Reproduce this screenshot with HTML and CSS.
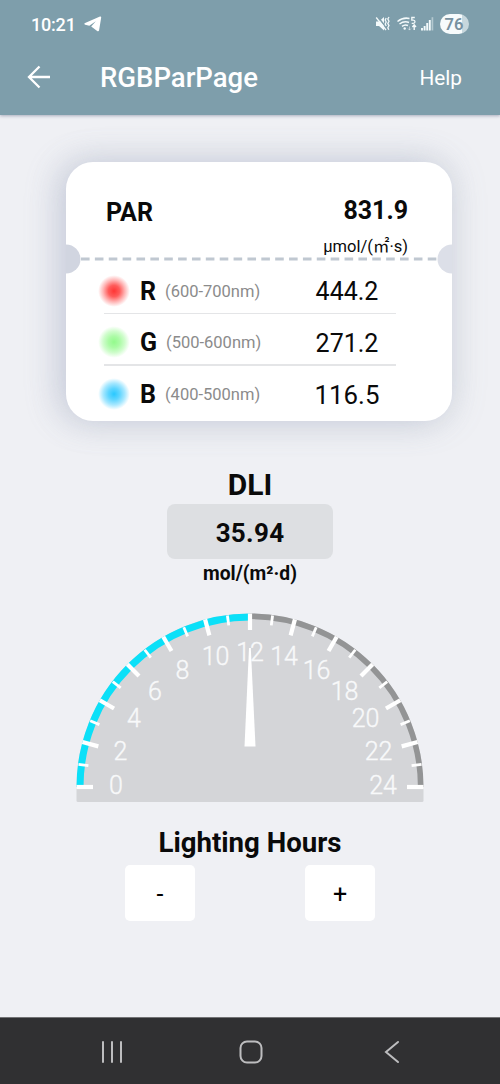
FILE: index.html
```html
<!DOCTYPE html>
<html lang="en">
<head>
<meta charset="utf-8">
<title>RGBParPage</title>
<link rel="stylesheet" href="styles.css">
</head>
<body>
<div class="screen">
  <header class="header">
    <div class="status">
      <span class="time">10:21</span>
      <svg class="telegram" width="18" height="16" viewBox="0 0 18 16"><path d="M0.500 7.200Q0 8.400 1.200 8.700L5.300 9.700 11.800 5.200 7.200 10.500 13.500 15.200Q14.800 15.700 15.100 14.300L17.200 1.500Q17.200 0.300 16 0.600z" fill="#fff"/></svg>
      <svg class="signals" width="60" height="18" viewBox="0 0 60 18" fill="none" stroke="#f4fafb">
        <path d="M1 6.500h3L9 2v13.500L4 11H1z" fill="#f4fafb" stroke="none"/>
        <path d="M2.500 1.500 12 13.500" stroke="#7e9eab" stroke-width="1.600"/>
        <path d="M1.200 2.500 11 15" stroke-width="1.300"/>
        <path d="M11.200 3l-1 2 1 2-1 2 1 2M14 2l-1.200 2 1.200 2.200-1.200 2.200L14 10.600l-1.200 2.200 1 2" stroke-width="1.300"/>
        <path d="M22.500 6.500Q28 2 34.500 3.500M24.500 9Q29 5.700 34 7.500M27 11.300Q30 9 33 10.500" stroke-width="1.500"/>
        <circle cx="29.700" cy="13.500" r="1.200" fill="#f4fafb" stroke="none"/>
        <path d="M39.800 2.500h-3v2.700h1.500q1.700.100 1.700 1.600 0 1.500-1.800 1.500h-1.500" stroke-width="1.300"/>
        <path d="M39.200 15v-5M37.400 12l1.800-2.200 1.800 2.200" stroke-width="1.400"/>
        <path d="M34.500 11.500v3.500M33 13.500l1.500 1.600 1.500-1.600" stroke-width="1" opacity=".5"/>
        <path d="M47 15.500v-2.500M49.600 15.500v-4.500M52.200 15.500V8M54.800 15.500V5" stroke-width="1.900"/>
        <path d="M57.400 15.500V2.200" stroke-width="1.700" opacity=".45"/>
      </svg>
      <span class="battery">76</span>
    </div>
    <div class="appbar">
      <svg class="back" width="24" height="24" viewBox="0 0 24 24" fill="none" stroke="#fff" stroke-width="2.300"><path d="M23 12H2M12.500 1.500 2 12l10.500 10.500"/></svg>
      <h1 class="title">RGBParPage</h1>
      <span class="help">Help</span>
    </div>
  </header>

  <main class="content">
    <section class="card">
      <div class="card-top">
        <span class="par">PAR</span>
        <div class="total">
          <span class="total-value">831.9</span>
          <span class="total-unit">μmol/(㎡·s)</span>
        </div>
      </div>
      <svg class="tear" width="386" height="30" viewBox="0 0 386 30">
        <path d="M0 0.500a14.500 14.500 0 0 1 0 29z" fill="#d1d5e0"/>
        <path d="M386 0.500a14.500 14.500 0 0 0 0 29z" fill="#dcdfe8"/>
        <path d="M15 15H371" stroke="#c0c8d1" stroke-width="2.800" stroke-dasharray="8.600 5.270"/>
      </svg>
      <div class="rows">
        <div class="row"><i class="dot red"></i><b>R</b><span class="range">(600-700nm)</span><span class="value">444.2</span></div>
        <div class="row"><i class="dot green"></i><b>G</b><span class="range">(500-600nm)</span><span class="value">271.2</span></div>
        <div class="row"><i class="dot blue"></i><b>B</b><span class="range">(400-500nm)</span><span class="value value-wide">116.5</span></div>
      </div>
    </section>

    <section class="dli">
      <h2 class="dli-title">DLI</h2>
      <div class="dli-value">35.94</div>
      <div class="dli-unit">mol/(m²·d)</div>
    </section>

    <svg class="gauge" width="350" height="192" viewBox="0 0 350 192">
      <path d="M1.500 176A173.500 173.500 0 0 1 348.500 176V189.500Q348.500 191 347 191H3Q1.500 191 1.500 189.500z" fill="#d4d5d8"/>
      <path d="M5 176A170 170 0 0 1 175 6" fill="none" stroke="#0be0f8" stroke-width="7"/>
      <path d="M175 5.300A170.700 170.700 0 0 1 345.700 176" fill="none" stroke="#939495" stroke-width="5.600"/>
      <g id="ticks" stroke="#fff"></g>
      <g class="scale">
        <text x="41" y="182.500">0</text><text x="45.500" y="148.500">2</text><text x="59" y="116">4</text>
        <text x="80" y="88.500">6</text><text x="107.500" y="67.500">8</text><text x="140.500" y="54">10</text>
        <text x="175" y="49.500">12</text><text x="209" y="54">14</text><text x="241.500" y="67.500">16</text>
        <text x="269.500" y="88.500">18</text><text x="290.500" y="116">20</text><text x="303.500" y="148.500">22</text>
        <text x="308" y="182.500">24</text>
      </g>
      <path d="M174 37h1.800L180.500 135.500h-11z" fill="#fff"/>
    </svg>

    <section class="hours">
      <h2 class="hours-title">Lighting Hours</h2>
      <div class="buttons"><button class="step">-</button><button class="step">+</button></div>
    </section>
  </main>

  <nav class="nav">
    <svg width="22" height="24" viewBox="0 0 22 24" fill="none" stroke="#bdbdbf" stroke-width="2" stroke-linecap="round"><path d="M2 2v20M11 2v20M20 2v20"/></svg>
    <svg class="home" width="24" height="24" viewBox="0 0 24 24" fill="none" stroke="#bdbdbf" stroke-width="2"><rect x="1.500" y="1.500" width="21" height="21" rx="6.500"/></svg>
    <svg width="16" height="24" viewBox="0 0 16 24" fill="none" stroke="#bdbdbf" stroke-width="2" stroke-linecap="round"><path d="M14 2 2 12l12 10"/></svg>
  </nav>
</div>
<script src="gauge.js"></script>
</body>
</html>
```
FILE: gauge.js
```js
// One tick per hour, 7.5 degrees apart; even hours are longer.
const ticks = document.getElementById("ticks");
for (let h = 0; h <= 24; h++) {
  const major = h % 2 === 0;
  const line = document.createElementNS("http://www.w3.org/2000/svg", "line");
  line.setAttribute("x1", major ? 1.5 : 2);
  line.setAttribute("x2", major ? 18 : 12);
  line.setAttribute("y1", 176);
  line.setAttribute("y2", 176);
  line.setAttribute("stroke-width", major ? 4.2 : 2.8);
  line.setAttribute("transform", `rotate(${h * 7.5} 175 176)`);
  ticks.appendChild(line);
}
```
FILE: styles.css
```css
* { box-sizing: border-box; }
body { margin: 0; font-family: Roboto, "Noto Sans CJK SC", sans-serif; color: #0a0a0a; }
h1, h2 { margin: 0; }
svg { display: block; flex: none; }
.screen { width: 500px; height: 1084px; display: flex; flex-direction: column; background: #eff0f4; overflow: hidden; }
.header { height: 115px; background: #7e9eab; color: #fff; box-shadow: 0 1px 3px rgba(100, 105, 135, .5); }
.status { height: 48px; padding: 0 31px; display: flex; align-items: center; }
.time { font-size: 18px; font-weight: 500; line-height: 20px; width: 44px; padding-top: 1px; letter-spacing: -.2px; }
.telegram { margin-left: 9px; }
.signals { margin-left: auto; }
.battery { width: 29px; height: 20px; margin-left: 5px; padding-right: 1px; border-radius: 10px; background: linear-gradient(90deg, #f7fbfc 76%, #c7d7dd 76%); color: #7891a0; font-size: 16.500px; font-weight: 600; line-height: 21px; text-align: center; }
.appbar { height: 58px; padding: 0 38px 0 27px; display: flex; align-items: center; }
.title { margin-left: 49px; padding-top: 1px; font-size: 27.500px; font-weight: 500; line-height: 32px; }
.help { margin-left: auto; padding-top: 1px; font-size: 20.800px; line-height: 24px; }
.content { flex: 1; display: flex; flex-direction: column; align-items: center; padding-top: 47px; }
.card { width: 386px; height: 259px; margin-left: 18px; border-radius: 27px; background: #fff; box-shadow: -9px 0 32px rgba(155, 163, 196, .3), 0 0 34px rgba(140, 155, 165, .26); }
.card-top { height: 82px; padding: 33px 44px 0 40px; display: flex; justify-content: space-between; }
.par { font-size: 25px; font-weight: 700; line-height: 36px; }
.total { display: flex; flex-direction: column; align-items: flex-end; }
.total-value { font-size: 25px; font-weight: 700; line-height: 32px; }
.total-unit { font-size: 16.500px; line-height: 20px; margin-top: 10px; }
.rows { padding: 0 56px 0 38px; margin-top: -9px; }
.row { height: 51.500px; display: flex; align-items: center; position: relative; }
.row + .row::before { content: ""; position: absolute; top: -4px; left: 0; right: 0; height: 1.500px; background: #e4e5e7; }
.dot { width: 32px; height: 32px; margin-left: -6px; flex: none; border-radius: 50%; }
.red { background: radial-gradient(circle, #ff3534 0%, #ff5c5b 25%, rgba(255, 70, 70, .4) 48%, rgba(255, 70, 70, 0) 70%); }
.green { background: radial-gradient(circle, #93fa8c 0%, #abfba5 25%, rgba(150, 250, 143, .45) 48%, rgba(150, 250, 143, 0) 70%); }
.blue { background: radial-gradient(circle, #29c8ff 0%, #5fd5ff 25%, rgba(60, 203, 255, .45) 48%, rgba(60, 203, 255, 0) 70%); }
.row b { font-size: 25px; line-height: 30px; margin-left: 10px; padding-top: 2px; }
.range { margin-left: 9px; padding-top: 1px; font-size: 16.500px; color: #8b8b8b; }
.value { width: 98px; padding-top: 2px; margin-left: auto; text-align: center; font-size: 25px; }
.value-wide { font-size: 25.800px; }
.dli { margin-top: 46px; display: flex; flex-direction: column; align-items: center; }
.dli-title { font-size: 30px; font-weight: 700; line-height: 36px; }
.dli-value { width: 166px; height: 55px; margin-top: 1px; border-radius: 8px; background: #dddfe2; font-size: 26px; font-weight: 700; line-height: 58px; text-align: center; letter-spacing: .3px; }
.dli-unit { font-size: 19.300px; font-weight: 700; line-height: 30px; }
.gauge { margin-top: 22px; }
.scale { fill: #f8f9fa; stroke: #f8f9fa; stroke-width: .35px; font-size: 25px; font-weight: 300; text-anchor: middle; }
.hours { margin-top: 22px; display: flex; flex-direction: column; align-items: center; }
.hours-title { font-size: 27.600px; font-weight: 700; line-height: 36px; }
.buttons { display: flex; gap: 110px; margin-top: 4px; }
.step { width: 70px; height: 56px; border: 0; border-radius: 5px; padding: 3px 0 0; background: #fff; color: #000; font: 400 25px Roboto, sans-serif; }
.nav { height: 67px; background: #303032; border-top: 1px solid #737375; padding: 2px 100px 0 101px; display: flex; align-items: center; justify-content: space-between; }
.home { margin-right: 5px; }
```
